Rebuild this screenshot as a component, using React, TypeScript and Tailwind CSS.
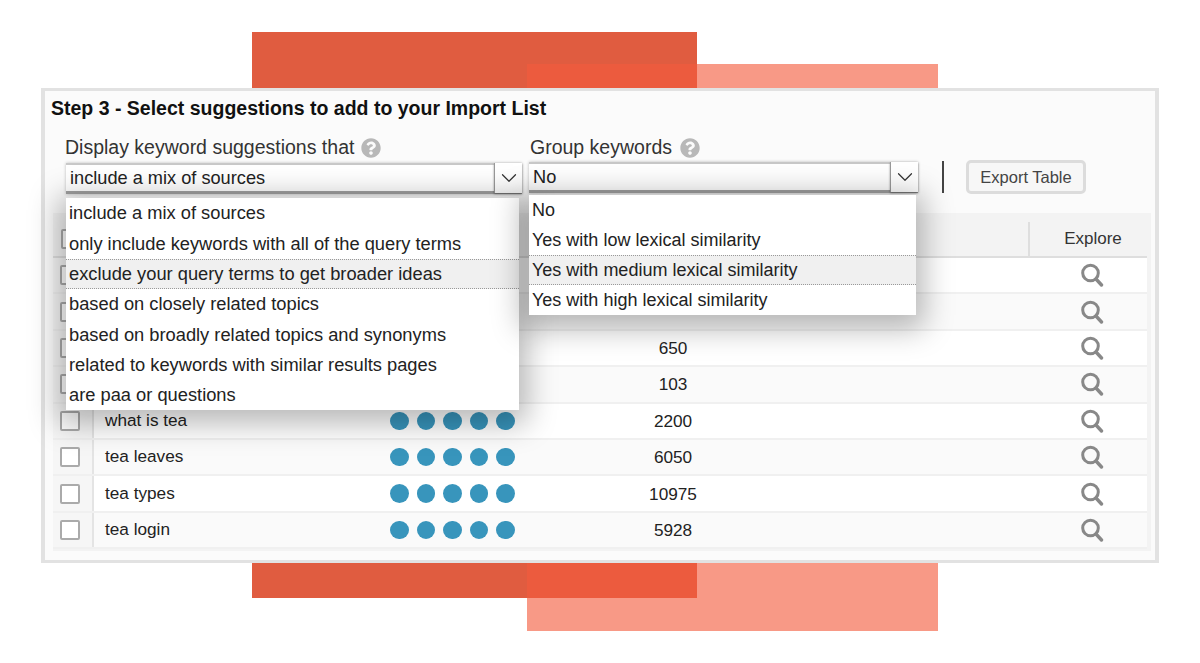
import React from 'react';
import { FaQuestionCircle } from 'react-icons/fa';
import { ChevronDown } from 'lucide-react';

const sourceOptions = [
  'include a mix of sources',
  'only include keywords with all of the query terms',
  'exclude your query terms to get broader ideas',
  'based on closely related topics',
  'based on broadly related topics and synonyms',
  'related to keywords with similar results pages',
  'are paa or questions',
];

const groupOptions = ['No', 'Yes with low lexical similarity', 'Yes with medium lexical similarity', 'Yes with high lexical similarity'];

const rows = [
  { keyword: '', count: '', dots: false },
  { keyword: '', count: '', dots: false },
  { keyword: '', count: '650', dots: false },
  { keyword: '', count: '103', dots: false },
  { keyword: 'what is tea', count: '2200', dots: true },
  { keyword: 'tea leaves', count: '6050', dots: true },
  { keyword: 'tea types', count: '10975', dots: true },
  { keyword: 'tea login', count: '5928', dots: true },
];

const SearchIcon = () => (
  <svg width="24" height="24" viewBox="0 0 24 24" fill="none" stroke="#888888" strokeWidth="3">
    <circle cx="10.5" cy="10" r="7.8" />
    <path d="M16 16l5.5 6" strokeLinecap="round" strokeWidth="3.4" />
  </svg>
);

type DropdownProps = {
  value: string;
  options: string[];
  box: string;
  menu: string;
  item: string;
};

const Dropdown = ({ value, options, box, menu, item }: DropdownProps) => (
  <div className={`relative ${box}`}>
    <div className="flex h-[31px] items-center border-t-2 border-b-[3px] border-t-[#c8c8c8] border-b-[#a0a0a0] bg-white shadow-[0_0_3px_rgba(0,0,0,0.25)]">
      <span className="flex-1 pl-[4px] pt-[2px] text-[18.2px] text-[#222]">{value}</span>
      <span className="flex h-[30px] w-[28px] items-center justify-center border-l border-[#999] bg-white shadow-[0_1px_2px_rgba(0,0,0,0.4)]">
        <ChevronDown size={26} strokeWidth={1.1} color="#333" />
      </span>
    </div>
    <ul className={`absolute left-0 z-20 bg-white shadow-[0_6px_28px_8px_rgba(0,0,0,0.28)] ${menu}`}>
      {options.map((opt, i) => (
        <li
          key={opt}
          className={`flex items-center pl-[3px] text-[#222] ${item} ${i === 2 ? 'border-y border-dotted border-[#999] bg-[#f0f0f0]' : ''}`}
        >
          {opt}
        </li>
      ))}
    </ul>
  </div>
);

export default function App() {
  return (
    <div className="relative h-[663px] w-[1200px] overflow-hidden bg-white pt-[88px] font-['Liberation_Sans',Arial,sans-serif]">
      <div className="absolute left-[252px] top-[32px] h-[566px] w-[445px] bg-[#e05c40]" />
      <div className="absolute left-[527px] top-[64px] h-[567px] w-[411px] bg-[#f89986]" />
      <div className="absolute left-[527px] top-[64px] h-[534px] w-[170px] bg-[#ec5b3e]" />

      <div className="relative ml-[41px] h-[475px] w-[1118px] border-x-4 border-y-[3px] border-[#e2e2e2] bg-[#fbfbfb] pl-[6px] pr-[4px]">
        <h2 className="pt-[6px] text-[19.5px] font-bold leading-[22px] text-[#111]">Step 3 - Select suggestions to add to your Import List</h2>

        <div className="mt-[15px] flex pl-[14px]">
          <div className="w-[465px]">
            <div className="flex h-[28px] items-center gap-[7px] text-[19.5px] text-[#333]">
              Display keyword suggestions that
              <FaQuestionCircle size={20} color="#b8b8b8" />
            </div>
            <Dropdown
              value="include a mix of sources"
              options={sourceOptions}
              box="ml-[1px] mt-[1px] w-[456px]"
              menu="right-[3px] top-[35px]"
              item="h-[30.3px] text-[18.3px]"
            />
          </div>
          <div className="w-[412px]">
            <div className="flex h-[28px] items-center gap-[8px] text-[19.5px] text-[#333]">
              Group keywords
              <FaQuestionCircle size={20} color="#b8b8b8" />
            </div>
            <Dropdown value="No" options={groupOptions} box="-ml-[1px] w-[389px]" menu="right-[2px] top-[33px]" item="h-[30px] text-[18px]" />
          </div>
          <div className="mt-[27px] h-[32px] w-[2px] bg-[#444]" />
          <button className="ml-[22px] mt-[26px] h-[34px] w-[120px] rounded-[5px] border-[3px] border-[#dcdcdc] bg-[#f7f7f7] text-[16.5px] text-[#444]">
            Export Table
          </button>
        </div>

        <div className="ml-[2px] mt-[19px] bg-[#f3f3f3] pb-[2px] pr-[4px] pt-[9px]">
          <div className="flex h-[36px] items-center border-b-2 border-[#dedede] bg-[#f3f3f3]">
            <div className="flex h-full w-[41px] items-center justify-center pr-[5px]">
              <span className="h-[20px] w-[20px] rounded-[2px] border-2 border-[#aaaaaa] bg-white" />
            </div>
            <div className="flex-1" />
            <div className="flex h-full w-[119px] items-center justify-center border-l-2 border-[#dedede] pl-[9px] text-[17px] text-[#333]">Explore</div>
          </div>
          {rows.map((row, i) => (
            <div key={i} className={`flex h-[36.4px] items-center border-b-2 border-[#f0f0f0] ${i % 2 === 0 ? 'bg-white' : 'bg-[#fafafa]'}`}>
              <div className="flex h-full w-[41px] items-center justify-center border-r-2 border-[#e4e4e4] bg-[#f6f6f6] pr-[5px]">
                <span className="h-[20px] w-[20px] rounded-[2px] border-2 border-[#aaaaaa] bg-white" />
              </div>
              <div className="w-[296px] pl-[11px] text-[17.2px] text-[#222]">{row.keyword}</div>
              <div className="flex w-[183px] gap-[8px]">
                {row.dots && [0, 1, 2, 3, 4].map(d => <span key={d} className="h-[18.5px] w-[18.5px] rounded-full bg-[#3895bc]" />)}
              </div>
              <div className="w-[200px] pt-[2px] text-center text-[17.2px] text-[#222]">{row.count}</div>
              <div className="flex-1" />
              <div className="flex w-[119px] justify-center pl-[9px]">
                <SearchIcon />
              </div>
            </div>
          ))}
        </div>
      </div>
    </div>
  );
}
